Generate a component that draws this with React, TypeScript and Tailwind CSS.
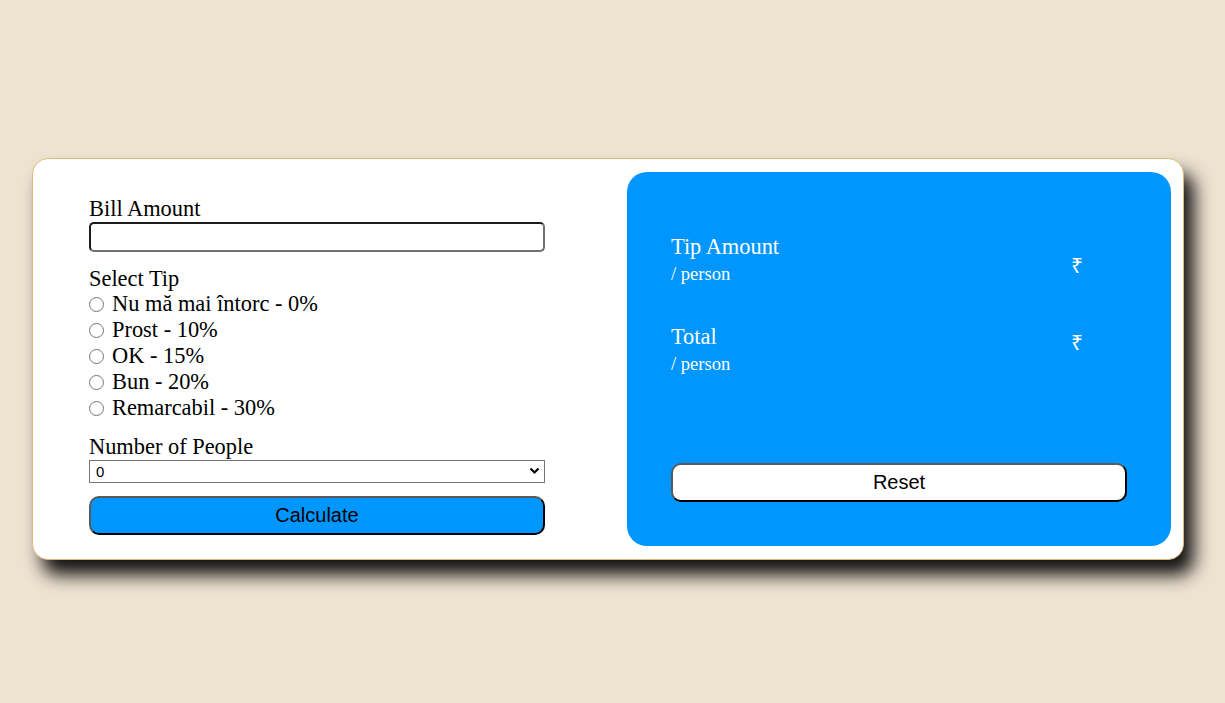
import { useState } from 'react';

const tips = [
  { label: 'Nu mă mai întorc - 0%', value: 0 },
  { label: 'Prost - 10%', value: 10 },
  { label: 'OK - 15%', value: 15 },
  { label: 'Bun - 20%', value: 20 },
  { label: 'Remarcabil - 30%', value: 30 },
];

const serif = "font-['Liberation_Serif','Times_New_Roman',serif]";
const sans = "font-['Liberation_Sans',Arial,sans-serif]";

export default function App() {
  const [bill, setBill] = useState('');
  const [tip, setTip] = useState<number | null>(null);
  const [people, setPeople] = useState('0');
  const [result, setResult] = useState<{ tip: string; total: string } | null>(null);

  const calculate = () => {
    const b = parseFloat(bill);
    const p = parseInt(people, 10);
    if (!b || !p || tip === null) return;
    const t = (b * tip) / 100 / p;
    setResult({ tip: t.toFixed(2), total: (b / p + t).toFixed(2) });
  };

  const reset = () => {
    setBill('');
    setTip(null);
    setPeople('0');
    setResult(null);
  };

  return (
    <div className="min-h-screen bg-[#eee2d1] pt-[158px] pl-[32px]">
      <div className="flex justify-between w-[1152px] h-[402px] rounded-[16px] border border-[#e3b97f] bg-white p-[13px] pr-[12px] shadow-[10px_15px_18px_rgba(0,0,0,0.92)]">
        {/* 左侧 — 输入 */}
        <div className={`w-[456px] ml-[43px] pt-[24px] text-[22.4px] text-black ${serif}`}>
          <label className="block leading-[25px]">Bill Amount</label>
          <input
            type="number" value={bill} onChange={e => setBill(e.target.value)}
            className="block w-full h-[30px] mt-[1px] rounded-[5px] border-2 border-t-[#1b1b1b] border-l-[#1b1b1b] border-b-[#707070] border-r-[#707070] bg-white px-1 text-[15px] outline-none"
          />

          <p className="mt-[14px] leading-[25px]">Select Tip</p>
          {tips.map(t => (
            <label key={t.value} className="flex items-center h-[26px] leading-[26px]">
              <input
                type="radio" name="tip" checked={tip === t.value} onChange={() => setTip(t.value)}
                className="appearance-none m-0 mr-[8px] w-[15px] h-[15px] rounded-full border border-[#767676] bg-white checked:border-[5px] checked:border-[#0075ff]"
              />
              {t.label}
            </label>
          ))}

          <label className="block mt-[13px] leading-[25px]">Number of People</label>
          <div className="relative mt-[1px]">
            <select
              value={people} onChange={e => setPeople(e.target.value)}
              className={`block w-full h-[23px] appearance-none rounded-none border border-[#767676] bg-white pl-[6px] text-[15px] leading-[21px] text-black outline-none ${sans}`}
            >
              {Array.from({ length: 11 }, (_, i) => (
                <option key={i} value={i}>{i}</option>
              ))}
            </select>
            <svg className="absolute right-[5px] top-[7px] w-[11px] h-[8px] pointer-events-none" viewBox="0 0 11 8">
              <path d="M1.5 1.5 L5.5 5.5 L9.5 1.5" fill="none" stroke="#000" strokeWidth="2.2" />
            </svg>
          </div>

          <button
            onClick={calculate}
            className={`block w-full h-[39px] mt-[13px] rounded-[10px] border-2 border-t-[#5a5a5a] border-l-[#5a5a5a] border-b-black border-r-black bg-[#0096ff] text-[20px] leading-[33px] text-black ${sans}`}
          >
            Calculate
          </button>
        </div>

        {/* 右侧 — 结果 */}
        <div className={`w-[544px] h-[374px] rounded-[20px] bg-[#0096ff] px-[44px] pt-[62px] text-white ${serif}`}>
          <div className="flex justify-between">
            <div>
              <p className="text-[22.4px] leading-[25px]">Tip Amount</p>
              <p className="mt-[4px] text-[18.6px] leading-[22px]">/ person</p>
            </div>
            <span className={`w-[56px] mt-[20px] text-[21px] leading-[23px] ${sans}`}>₹{result?.tip}</span>
          </div>
          <div className="flex justify-between mt-[39px]">
            <div>
              <p className="text-[22.4px] leading-[25px]">Total</p>
              <p className="mt-[4px] text-[18.6px] leading-[22px]">/ person</p>
            </div>
            <span className={`w-[56px] mt-[7px] text-[21px] leading-[23px] ${sans}`}>₹{result?.total}</span>
          </div>
          <button
            onClick={reset}
            className={`block w-full h-[39px] mt-[88px] rounded-[10px] border-2 border-t-[#5a5a5a] border-l-[#5a5a5a] border-b-black border-r-black bg-white text-[20px] leading-[33px] text-black ${sans}`}
          >
            Reset
          </button>
        </div>
      </div>
    </div>
  );
}
